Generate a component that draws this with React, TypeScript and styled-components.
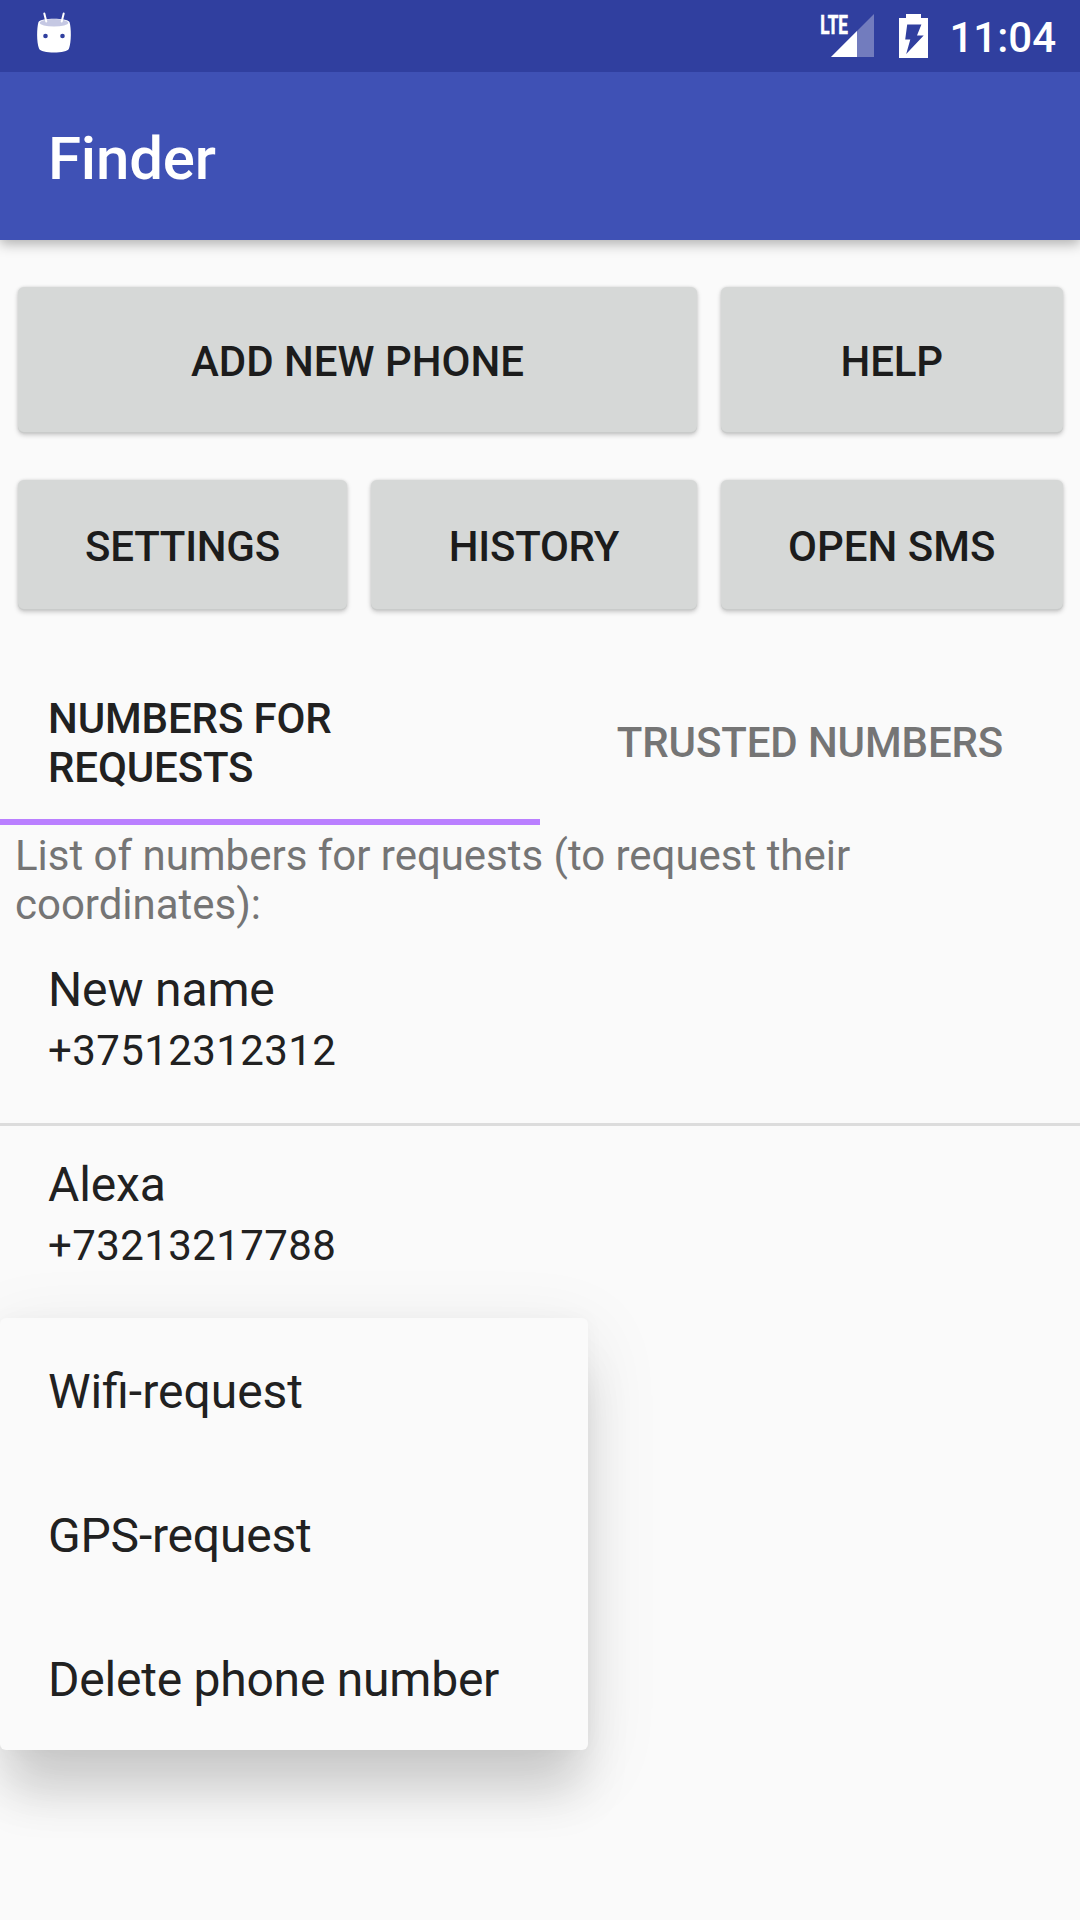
import React from "react";
import styled, { createGlobalStyle } from "styled-components";

const GlobalStyle = createGlobalStyle`
  * { box-sizing: border-box; }
  body {
    margin: 0;
    background: #fafafa;
    font-family: Roboto, "Noto Sans", sans-serif;
    color: #212121;
  }
`;

const Screen = styled.div`
  position: relative;
  display: flex;
  flex-direction: column;
  width: 1080px;
  height: 1920px;
  overflow: hidden;
  background: #fafafa;
`;

const StatusBar = styled.header`
  position: relative;
  z-index: 1;
  display: flex;
  align-items: flex-start;
  height: 72px;
  flex: none;
  background: #303f9f;
`;

const StatusIcon = styled.svg<{ $gap: number }>`
  display: block;
  flex: none;
  margin-left: ${(p) => p.$gap}px;
`;

const StatusIcons = styled.div`
  display: flex;
  margin-left: auto;
  padding-right: 24px;
`;

const Clock = styled.time`
  margin-left: 21px;
  padding-top: 13px;
  font-size: 42px;
  line-height: 50px;
  font-weight: 500;
  color: #fff;
`;

const AppBar = styled.div`
  display: flex;
  align-items: center;
  height: 168px;
  flex: none;
  padding: 5px 48px 0;
  background: #3f51b5;
  box-shadow: 0 4px 12px rgba(0, 0, 0, 0.3);
`;

const Title = styled.h1`
  margin: 0;
  font-size: 60px;
  line-height: 70px;
  font-weight: 500;
  letter-spacing: -0.2px;
  color: #fff;
`;

const Actions = styled.section`
  display: flex;
  flex-direction: column;
  gap: 47px;
  padding: 47px 17.5px 51px 18px;
`;

const ActionRow = styled.div<{ $height: number; $columns: string }>`
  display: grid;
  grid-template-columns: ${(p) => p.$columns};
  column-gap: 24px;
  height: ${(p) => p.$height}px;
`;

const ActionButton = styled.button<{ $tracking?: number }>`
  border: 0;
  border-radius: 6px;
  padding: 3px 0 0;
  background: #d6d8d7;
  box-shadow: 0 2px 5px rgba(0, 0, 0, 0.2), 0 0 3px rgba(0, 0, 0, 0.1),
    inset 0 -1px 0 rgba(0, 0, 0, 0.06);
  font: 500 42px/50px Roboto, "Noto Sans", sans-serif;
  letter-spacing: ${(p) => p.$tracking ?? 0}px;
  color: #1c1c1c;
`;

const Tabs = styled.nav`
  display: grid;
  grid-template-columns: 1fr 1fr;
  height: 164px;
`;

const Tab = styled.div<{ $active?: boolean }>`
  display: flex;
  align-items: center;
  justify-content: ${(p) => (p.$active ? "flex-start" : "center")};
  padding: ${(p) => (p.$active ? "6px 48px 0" : "5px 48px 0")};
  border-bottom: 6px solid ${(p) => (p.$active ? "#ba7fff" : "transparent")};
  font-size: 42px;
  line-height: 49px;
  font-weight: 500;
  letter-spacing: -0.13px;
  color: ${(p) => (p.$active ? "#212121" : "#757575")};
`;

const Caption = styled.p`
  margin: 0;
  padding: 6px 15px 0;
  height: 119px;
  font-size: 42px;
  line-height: 49px;
  letter-spacing: -0.02px;
  color: #757575;
`;

const Contact = styled.article<{ $first: boolean }>`
  display: flex;
  flex-direction: column;
  height: 179px;
  padding: ${(p) => (p.$first ? 18 : 31)}px 48px 0;
`;

const ContactName = styled.span`
  font-size: 48px;
  line-height: 56px;
  letter-spacing: -0.15px;
`;

const ContactNumber = styled.span`
  margin-top: 8px;
  font-size: 42px;
  line-height: 49px;
  letter-spacing: 0.4px;
`;

const Divider = styled.hr`
  flex: none;
  width: 100%;
  height: 3px;
  margin: 0;
  border: 0;
  background: #dcdcdc;
`;

const PopupMenu = styled.ul`
  position: absolute;
  left: 0;
  top: 1318px;
  width: 588px;
  margin: 0;
  padding: 0;
  list-style: none;
  border-radius: 6px;
  background: #fafafa;
  box-shadow: 0 50px 46px -8px rgba(0, 0, 0, 0.145),
    0 18px 76px 4px rgba(0, 0, 0, 0.08), 0 0 20px rgba(0, 0, 0, 0.03);
`;

const PopupItem = styled.li<{ $tracking: number }>`
  display: flex;
  align-items: center;
  height: 144px;
  padding: 4px 48px 0;
  font-size: 48px;
  line-height: 56px;
  letter-spacing: ${(p) => p.$tracking}px;
`;

const CupcakeIcon = () => (
  <StatusIcon $gap={36} width="36" height="72" viewBox="0 0 36 72">
    <path
      d="M2.5 22C5 17.8 31 17.8 33.5 22C35.3 28 35.5 42 33 48.5C31.5 53.8 4.5 53.8 3 48.5C.5 42 .7 28 2.5 22Z"
      fill="#fff"
    />
    <ellipse cx="18" cy="22.8" rx="14.3" ry="3.7" fill="#c5c8e3" />
    <path d="M8.3 13.5l2 8M27.7 13.5l-2 8" stroke="#fff" strokeWidth="2" strokeLinecap="round" />
    <circle cx="9.5" cy="36" r="2.3" fill="#303f9f" />
    <circle cx="26.5" cy="36" r="2.3" fill="#303f9f" />
  </StatusIcon>
);

const SignalIcon = () => (
  <StatusIcon $gap={0} width="54" height="72" viewBox="0 0 54 72">
    <path d="M54 14V57H11Z" fill="#fff" fillOpacity="0.32" />
    <path d="M37 31V57H11Z" fill="#fff" />
    <text
      x="0.3"
      y="33.5"
      fill="#fff"
      stroke="#fff"
      strokeWidth="0.7"
      fontFamily="Roboto, sans-serif"
      fontSize="26"
      fontWeight="700"
      textLength="27.5"
      lengthAdjust="spacingAndGlyphs"
    >
      LTE
    </text>
  </StatusIcon>
);

const BatteryIcon = () => (
  <StatusIcon $gap={25} width="29" height="72" viewBox="0 0 29 72">
    <path d="M7 14H22V18H29V58H0V18H7Z" fill="#fff" />
    <path d="M8.2 24.5H22.4L18 35.5H24.7L7.2 54L11.3 39.5H6.2Z" fill="#303f9f" />
  </StatusIcon>
);

const contacts = [
  { name: "New name", number: "+37512312312" },
  { name: "Alexa", number: "+73213217788" },
];

const menuItems = [
  { label: "Wifi-request", tracking: 0 },
  { label: "GPS-request", tracking: -0.2 },
  { label: "Delete phone number", tracking: -0.23 },
];

export default function App() {
  return (
    <>
      <GlobalStyle />
      <Screen>
        <StatusBar>
          <CupcakeIcon />
          <StatusIcons>
            <SignalIcon />
            <BatteryIcon />
            <Clock>11:04</Clock>
          </StatusIcons>
        </StatusBar>
        <AppBar>
          <Title>Finder</Title>
        </AppBar>
        <Actions>
          <ActionRow $height={146} $columns="679px 1fr">
            <ActionButton>ADD NEW PHONE</ActionButton>
            <ActionButton $tracking={-0.1}>HELP</ActionButton>
          </ActionRow>
          <ActionRow $height={130} $columns="329px 326px 1fr">
            <ActionButton $tracking={-0.25}>SETTINGS</ActionButton>
            <ActionButton $tracking={-0.25}>HISTORY</ActionButton>
            <ActionButton>OPEN SMS</ActionButton>
          </ActionRow>
        </Actions>
        <Tabs>
          <Tab $active>NUMBERS FOR REQUESTS</Tab>
          <Tab>TRUSTED NUMBERS</Tab>
        </Tabs>
        <Caption>List of numbers for requests (to request their coordinates):</Caption>
        {contacts.map((contact, index) => (
          <React.Fragment key={contact.number}>
            {index > 0 && <Divider />}
            <Contact $first={index === 0}>
              <ContactName>{contact.name}</ContactName>
              <ContactNumber>{contact.number}</ContactNumber>
            </Contact>
          </React.Fragment>
        ))}
        <PopupMenu>
          {menuItems.map((item) => (
            <PopupItem key={item.label} $tracking={item.tracking}>
              {item.label}
            </PopupItem>
          ))}
        </PopupMenu>
      </Screen>
    </>
  );
}
